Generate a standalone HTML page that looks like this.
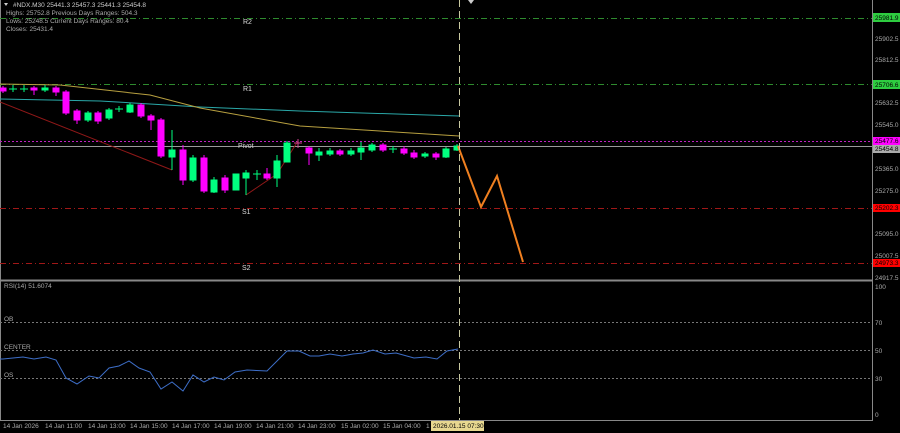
<!DOCTYPE html>
<html><head><meta charset="utf-8"><style>
html,body{margin:0;padding:0;background:#000;width:900px;height:433px;overflow:hidden}
svg{display:block;font-family:"Liberation Sans",sans-serif}
</style></head><body>
<svg width="900" height="433" viewBox="0 0 900 433" xmlns="http://www.w3.org/2000/svg">
<rect width="900" height="433" fill="#000"/>
<!-- frame -->
<line x1="0.5" y1="0" x2="0.5" y2="420" stroke="#888"/>
<line x1="872.5" y1="0" x2="872.5" y2="420" stroke="#888"/>
<line x1="0" y1="280.5" x2="873" y2="280.5" stroke="#888" stroke-width="2"/>
<line x1="0" y1="420.5" x2="873" y2="420.5" stroke="#888"/>
<!-- levels -->
<g stroke-width="1" fill="none">
<line x1="0" y1="18.5" x2="872" y2="18.5" stroke="#2e8b2e" stroke-dasharray="6,3,1,3"/>
<line x1="0" y1="84.5" x2="872" y2="84.5" stroke="#2e8b2e" stroke-dasharray="6,3,1,3"/>
<line x1="0" y1="141.5" x2="872" y2="141.5" stroke="#c020c0" stroke-dasharray="2,2"/>
<line x1="0" y1="146.5" x2="872" y2="146.5" stroke="#9a9a9a"/>
<line x1="0" y1="208.5" x2="872" y2="208.5" stroke="#a01818" stroke-dasharray="6,3,1,3"/>
<line x1="0" y1="263.5" x2="872" y2="263.5" stroke="#a01818" stroke-dasharray="6,3,1,3"/>
</g>
<g fill="#ddd" font-size="7">
<text x="243" y="24">R2</text><text x="243" y="91">R1</text>
<text x="238" y="148" fill="#ccc">Pivot</text>
<text x="242" y="214">S1</text><text x="242" y="270">S2</text>
</g>
<!-- MAs -->
<polyline fill="none" stroke="#2aa8a8" points="0,99 100,101 200,107 300,111 459,116"/>
<polyline fill="none" stroke="#b8a040" points="0,84 60,85 150,95 200,108 300,126 459,136"/>
<polyline fill="none" stroke="#901818" points="0,102 172,170"/>
<polyline fill="none" stroke="#901818" points="246,195 277,174 298,141"/>
<!-- candles -->
<g stroke-width="1">
<g stroke="#ff00ff" fill="#ff00ff">
<line x1="3" y1="86" x2="3" y2="93"/><rect x="0" y="88" width="6" height="3"/>
<line x1="34" y1="86" x2="34" y2="95"/><rect x="31" y="88" width="6" height="2"/>
<line x1="56" y1="86" x2="56" y2="96"/><rect x="53" y="88" width="6" height="4"/>
<line x1="66" y1="90" x2="66" y2="115"/><rect x="63" y="92" width="6" height="21"/>
<line x1="77" y1="109" x2="77" y2="124"/><rect x="74" y="111" width="6" height="9"/>
<line x1="98" y1="111" x2="98" y2="124"/><rect x="95" y="113" width="6" height="8"/>
<line x1="141" y1="103" x2="141" y2="118"/><rect x="138" y="105" width="6" height="11"/>
<line x1="151" y1="114" x2="151" y2="130"/><rect x="148" y="116" width="6" height="4"/>
<line x1="161" y1="118" x2="161" y2="158"/><rect x="158" y="120" width="6" height="36"/>
<line x1="183" y1="145" x2="183" y2="185"/><rect x="180" y="150" width="6" height="30"/>
<line x1="204" y1="155" x2="204" y2="193"/><rect x="201" y="158" width="6" height="33"/>
<line x1="225" y1="175" x2="225" y2="193"/><rect x="222" y="178" width="6" height="12"/>
<line x1="267" y1="168" x2="267" y2="180"/><rect x="264" y="174" width="6" height="4"/>
<line x1="298" y1="139" x2="298" y2="148" stroke="#d04090"/><line x1="294" y1="143" x2="302" y2="143" stroke="#d04090"/>
<line x1="309" y1="146" x2="309" y2="165"/><rect x="306" y="148" width="6" height="5"/>
<line x1="340" y1="149" x2="340" y2="156"/><rect x="337" y="151" width="6" height="3"/>
<line x1="383" y1="143" x2="383" y2="152"/><rect x="380" y="145" width="6" height="5"/>
<line x1="404" y1="146" x2="404" y2="155"/><rect x="401" y="149" width="6" height="4"/>
<line x1="414" y1="150" x2="414" y2="159"/><rect x="411" y="153" width="6" height="4"/>
<line x1="436" y1="152" x2="436" y2="160"/><rect x="433" y="154" width="6" height="3"/>
</g>
<g stroke="#00ff7f" fill="#00ff7f">
<line x1="13" y1="85" x2="13" y2="92"/><line x1="9" y1="89" x2="17" y2="89"/>
<line x1="24" y1="85" x2="24" y2="92"/><line x1="20" y1="89" x2="28" y2="89"/>
<line x1="45" y1="85" x2="45" y2="92"/><rect x="42" y="88" width="6" height="2"/>
<line x1="88" y1="111" x2="88" y2="122"/><rect x="85" y="113" width="6" height="7"/>
<line x1="109" y1="108" x2="109" y2="120"/><rect x="106" y="110" width="6" height="8"/>
<line x1="119" y1="106" x2="119" y2="112"/><line x1="115" y1="109" x2="123" y2="109"/>
<line x1="130" y1="103" x2="130" y2="113"/><rect x="127" y="105" width="6" height="7"/>
<line x1="172" y1="130" x2="172" y2="170"/><rect x="169" y="150" width="6" height="7"/>
<line x1="193" y1="155" x2="193" y2="182"/><rect x="190" y="158" width="6" height="22"/>
<line x1="214" y1="177" x2="214" y2="193"/><rect x="211" y="180" width="6" height="12"/>
<line x1="236" y1="174" x2="236" y2="190"/><rect x="233" y="174" width="6" height="16"/>
<line x1="246" y1="170" x2="246" y2="195"/><rect x="243" y="173" width="6" height="5"/>
<line x1="257" y1="170" x2="257" y2="180"/><line x1="253" y1="174" x2="261" y2="174"/>
<line x1="277" y1="155" x2="277" y2="187"/><rect x="274" y="161" width="6" height="17"/>
<line x1="287" y1="141" x2="287" y2="162"/><rect x="284" y="143" width="6" height="19"/>
<line x1="319" y1="148" x2="319" y2="161"/><rect x="316" y="152" width="6" height="3"/>
<line x1="330" y1="148" x2="330" y2="156"/><rect x="327" y="151" width="6" height="3"/>
<line x1="351" y1="148" x2="351" y2="156"/><rect x="348" y="151" width="6" height="3"/>
<line x1="361" y1="142" x2="361" y2="160"/><rect x="358" y="148" width="6" height="4"/>
<line x1="372" y1="143" x2="372" y2="152"/><rect x="369" y="145" width="6" height="5"/>
<line x1="393" y1="146" x2="393" y2="153"/><line x1="389" y1="149" x2="397" y2="149"/>
<line x1="425" y1="152" x2="425" y2="158"/><rect x="422" y="154" width="6" height="2"/>
<line x1="446" y1="147" x2="446" y2="158"/><rect x="443" y="149" width="6" height="8"/>
<line x1="457" y1="144" x2="457" y2="151"/><rect x="454" y="146" width="5" height="4"/>
</g>
</g>
<!-- forecast -->
<polyline fill="none" stroke="#f08020" stroke-width="2" points="458,146 481,207 497,176 523,262"/>
<!-- vertical dashed -->
<line x1="459.5" y1="0" x2="459.5" y2="420" stroke="#c8c8a0" stroke-dasharray="7,4"/>
<path d="M468 0 L474 0 L471 4 Z" fill="#ccc"/>
<!-- header text -->
<g font-size="6.5" fill="#ccc">
<path d="M4 3 L8 3 L6 6 Z" fill="#ccc"/>
<text x="13" y="7">#NDX.M30  25441.3 25457.3 25441.3 25454.8</text>
<text x="6" y="15" fill="#aaa">Highs: 25752.8    Previous Days Ranges: 504.3</text>
<text x="6" y="23" fill="#aaa">Lows: 25248.5    Current Days Ranges: 80.4</text>
<text x="6" y="31" fill="#aaa">Closes: 25431.4</text>
</g>
<!-- price axis -->
<g font-size="6.5" fill="#aaa">
<rect x="873" y="13" width="27" height="9" fill="#2ecc40"/><text x="875" y="20" fill="#000">25981.9</text>
<text x="875" y="41">25902.5</text>
<text x="875" y="62">25812.5</text>
<rect x="873" y="80" width="27" height="9" fill="#2ecc40"/><text x="875" y="87" fill="#000">25706.6</text>
<text x="875" y="105">25632.5</text>
<text x="875" y="127">25545.0</text>
<rect x="873" y="137" width="27" height="8" fill="#ff00ff"/><text x="875" y="143" fill="#000">25477.6</text>
<rect x="873" y="145" width="27" height="8" fill="#aaa"/><text x="875" y="151" fill="#000">25454.8</text>
<text x="875" y="171">25365.0</text>
<text x="875" y="193">25275.0</text>
<rect x="873" y="204" width="27" height="8" fill="#ff0000"/><text x="875" y="210" fill="#000">25202.3</text>
<text x="875" y="236">25095.0</text>
<text x="875" y="258">25007.5</text>
<rect x="873" y="259" width="27" height="8" fill="#ff0000"/><text x="875" y="265" fill="#000">24973.3</text>
<text x="875" y="280">24917.5</text>
<text x="875" y="289">100</text>
<text x="875" y="325">70</text>
<text x="875" y="353">50</text>
<text x="875" y="381">30</text>
<text x="875" y="417">0</text>
</g>
<!-- RSI pane -->
<g stroke="#777" stroke-dasharray="2,2">
<line x1="0" y1="322.5" x2="872" y2="322.5"/>
<line x1="0" y1="350.5" x2="872" y2="350.5"/>
<line x1="0" y1="378.5" x2="872" y2="378.5"/>
</g>
<g font-size="6.5" fill="#aaa">
<text x="4" y="288">RSI(14) 51.6074</text>
<text x="4" y="321">OB</text>
<text x="4" y="349">CENTER</text>
<text x="4" y="377">OS</text>
</g>
<polyline fill="none" stroke="#3d6ec8" points="0,359 3,359 23,357 34,359 46,357 56,360 66,378 77,384 89,376 99,378 109,368 119,366 129,361 139,368 150,372 161,389 172,382 183,391 193,375 204,382 214,377 224,380 235,372 247,370 267,371 287,351 299,351 310,356 319,356 330,354 342,356 353,354 363,353 373,350 385,354 396,353 414,358 426,357 437,359 447,351 458,349"/>
<!-- time axis -->
<g font-size="6.5" fill="#aaa">
<text x="3" y="428">14 Jan 2026</text>
<text x="45" y="428">14 Jan 11:00</text>
<text x="88" y="428">14 Jan 13:00</text>
<text x="130" y="428">14 Jan 15:00</text>
<text x="172" y="428">14 Jan 17:00</text>
<text x="214" y="428">14 Jan 19:00</text>
<text x="256" y="428">14 Jan 21:00</text>
<text x="298" y="428">14 Jan 23:00</text>
<text x="341" y="428">15 Jan 02:00</text>
<text x="383" y="428">15 Jan 04:00</text>
<text x="426" y="428">1</text>
<rect x="431" y="421" width="53" height="10" fill="#e8d890"/>
<text x="433" y="428" fill="#000">2026.01.15 07:30</text>
</g>
</svg>
</body></html>
